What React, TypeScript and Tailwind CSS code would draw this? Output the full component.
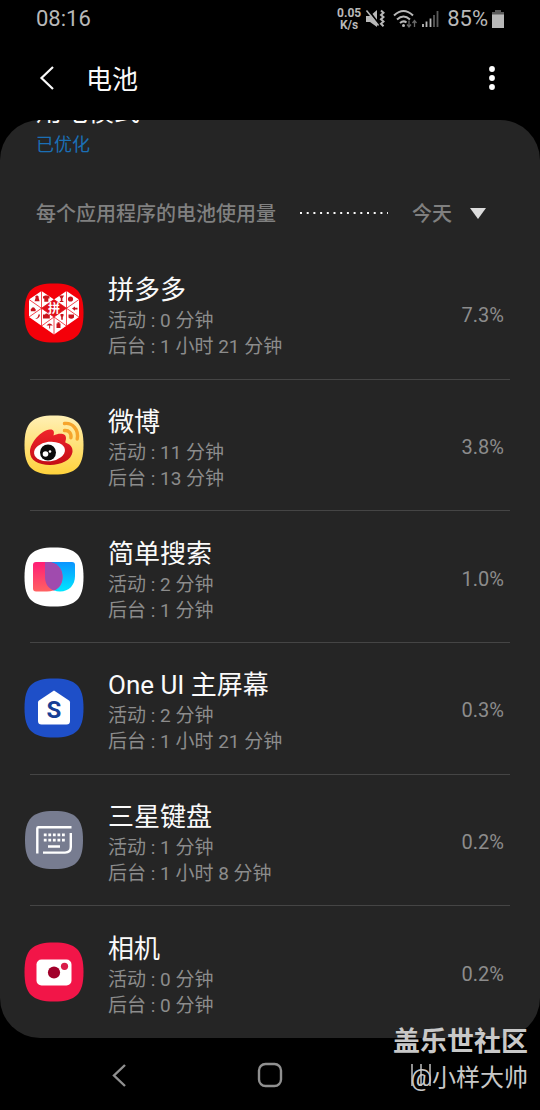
import type { ReactNode } from "react";

interface AppUsage {
  name: string;
  active: string;
  background: string;
  percent: string;
  icon: ReactNode;
}

const SQUIRCLE = "M30 0.5C52 0.5 59.5 8 59.5 30S52 59.5 30 59.5 0.5 52 0.5 30 8 0.5 30 0.5Z";

function PinduoduoIcon() {
  return (
    <svg viewBox="0 0 60 60" className="size-15 shrink-0" aria-hidden="true">
      <path d={SQUIRCLE} fill="#f40009" />
      <path d="M5 16.5 17.5 8 30 16.5 42.5 8 55 16.5V34L30 51.5 5 34Z" fill="#fff" />
      <path
        d="M17.5 8V43M42.5 8V43M30 34V52M5 16.5 30 34M5 34 30 16.5M55 16.5 30 34M55 34 30 16.5M17.5 43 30 34 42.5 43"
        fill="none"
        stroke="#f01822"
        strokeWidth="0.8"
      />
      <path d="M17.5 25.2 30 16.5 42.5 25.2 30 34Z" fill="#e0101a" />
      <g fill="#c8141c">
        <path d="M13 12.5a1.6 1.6 0 0 1 1.6 2.2l1 3.6h-5l1-3.6a1.6 1.6 0 0 1 1.4-2.2Z" />
        <path d="m19 13.5 2-1h2.5l2 1v2h-1.2v3.2h-4v-3.2H19Z" />
        <path d="M6.8 26.5q2.3-4.6 4.8 0v1.8H6.8Z" />
        <path d="M16 31.5q-.4 4.4-5 4.6 3.4-1.4 3.4-4.6Z" />
        <path d="M19 31.5h2l.8-1h1.6l.8 1h1.6v4H19Z" />
        <path d="M35 12.5h5l-1.6 3v2.6h1v.8h-3.6v-.8h1V15.5Z" />
        <circle cx="46.5" cy="16" r="2.6" />
        <path d="m48 25.5 3-2v1.2h2.5v1.8H51v1.2Z" />
        <path d="M36.5 31h3v2l-.7.8v3h-1.6v-3l-.7-.8Z" />
        <path d="M44.5 31.5h5.5v3q-2.7 2.5-5.5 0Z" />
        <path d="M22.5 42.5q3-4 6.3 0h-2.7v3h-.9v-3Z" />
        <path d="M32.5 40.5h1v-1.2h2v1.2h1V45h-4Z" />
      </g>
      <text x="30" y="30" textAnchor="middle" fontSize="12" fontWeight="700" fill="#fff">
        拼
      </text>
    </svg>
  );
}

function WeiboIcon() {
  return (
    <svg viewBox="0 0 60 60" className="size-15 shrink-0" aria-hidden="true">
      <defs>
        <linearGradient id="weibo-bg" x1="0" y1="0" x2="0" y2="1">
          <stop offset="0" stopColor="#fff0b5" />
          <stop offset="1" stopColor="#ffd23c" />
        </linearGradient>
        <linearGradient id="weibo-body" x1="0" y1="0" x2="0" y2="1">
          <stop offset="0" stopColor="#f0252a" />
          <stop offset="1" stopColor="#c40d16" />
        </linearGradient>
      </defs>
      <path d={SQUIRCLE} fill="url(#weibo-bg)" />
      <path
        d="M6 37C6 28 17 15 26 14.5C30 14.3 30.5 17 29.5 20.5C35 18 42 18 42 23C42 25 41.3 26.3 41.3 27.5C46 29 49 32 48.5 37C47.5 45 37 50 26 50C14 50 6 45 6 37Z"
        fill="url(#weibo-body)"
      />
      <ellipse cx="25.5" cy="36.5" rx="15.5" ry="9.7" transform="rotate(-7 25.5 36.5)" fill="#fff" />
      <circle cx="24" cy="37.5" r="8" fill="#0b0b0b" />
      <circle cx="21.5" cy="39" r="2.8" fill="#fff" />
      <circle cx="26" cy="36.5" r="1.3" fill="#fff" />
      <path
        d="M40.5 8.5C48.5 7.5 55 14.5 53.2 24M40.5 15.5C44.8 15 47.7 18.5 46.9 22.8"
        fill="none"
        stroke="#f6a52c"
        strokeWidth="3.4"
        strokeLinecap="round"
      />
    </svg>
  );
}

function SimpleSearchIcon() {
  return (
    <svg viewBox="0 0 60 60" className="size-15 shrink-0" aria-hidden="true">
      <defs>
        <linearGradient id="search-pink" x1="0" y1="0" x2="0" y2="1">
          <stop offset="0" stopColor="#ff1d76" />
          <stop offset="1" stopColor="#ff6262" />
        </linearGradient>
        <linearGradient id="search-blue" x1="0" y1="0" x2="0" y2="1">
          <stop offset="0" stopColor="#0a94ff" />
          <stop offset="1" stopColor="#00e7ff" />
        </linearGradient>
      </defs>
      <path d={SQUIRCLE} fill="#fff" />
      <path d="M21 15H48Q51 15 51 18V29C51 38 45 44.5 36 44.5C27 44.5 21 38 21 30Z" fill="url(#search-blue)" />
      <path d="M12 15H23C32 15 38.5 21 38.5 30S32 44.5 23 44.5H12Q9 44.5 9 41.5V18Q9 15 12 15Z" fill="url(#search-pink)" />
      <path d="M21 15H23C32 15 38.5 21 38.5 30C38.5 37 35 41.5 30 43.5C24.5 41.5 21 37 21 30Z" fill="#a04bae" />
    </svg>
  );
}

function OneUiIcon() {
  return (
    <svg viewBox="0 0 60 60" className="size-15 shrink-0" aria-hidden="true">
      <path d={SQUIRCLE} fill="#1e4fc8" />
      <path d="M30 12.5 45 22.5Q46 23.2 46 24.5V43Q46 46.5 42.5 46.5H17.5Q14 46.5 14 43V24.5Q14 23.2 15 22.5Z" fill="#fff" />
      <text x="30" y="40" textAnchor="middle" fontSize="24" fontWeight="700" fill="#163e95">
        S
      </text>
    </svg>
  );
}

function KeyboardIcon() {
  return (
    <svg viewBox="0 0 60 60" className="size-15 shrink-0" aria-hidden="true">
      <path d="M30 1C51.5 1 59 8.5 59 30S51.5 59 30 59 1 51.5 1 30 8.5 1 30 1Z" fill="#777c90" />
      <path d="M13.3 43.5V18.5Q13.3 17.3 14.5 17.3H47.5M46.8 23V37Q46.8 42.6 41 42.6H19" fill="none" stroke="#fff" strokeWidth="2.4" />
      <path
        d="M19.8 24.9H42M19.8 30.2H42"
        fill="none"
        stroke="#fff"
        strokeWidth="2.8"
        strokeDasharray="2.8 1.75"
      />
      <path d="M24 36.5H36" stroke="#fff" strokeWidth="2.5" />
    </svg>
  );
}

function CameraIcon() {
  return (
    <svg viewBox="0 0 60 60" className="size-15 shrink-0" aria-hidden="true">
      <path d={SQUIRCLE} fill="#f21548" />
      <rect x="12.5" y="17.5" width="35" height="26" rx="5" fill="#fff" />
      <circle cx="30" cy="30.5" r="6.1" fill="#a1002a" />
      <circle cx="40.5" cy="24.3" r="3.6" fill="#d91c49" />
    </svg>
  );
}

const APPS: AppUsage[] = [
  { name: "拼多多", active: "0 分钟", background: "1 小时 21 分钟", percent: "7.3%", icon: <PinduoduoIcon /> },
  { name: "微博", active: "11 分钟", background: "13 分钟", percent: "3.8%", icon: <WeiboIcon /> },
  { name: "简单搜索", active: "2 分钟", background: "1 分钟", percent: "1.0%", icon: <SimpleSearchIcon /> },
  { name: "One UI 主屏幕", active: "2 分钟", background: "1 小时 21 分钟", percent: "0.3%", icon: <OneUiIcon /> },
  { name: "三星键盘", active: "1 分钟", background: "1 小时 8 分钟", percent: "0.2%", icon: <KeyboardIcon /> },
  { name: "相机", active: "0 分钟", background: "0 分钟", percent: "0.2%", icon: <CameraIcon /> },
];

function StatusBar() {
  return (
    <div className="flex h-9 items-center justify-between px-9 pt-0.5 text-[22px] leading-8 text-[#b8b8b8]">
      <span>08:16</span>
      <div className="flex items-center">
        <div className="mr-1 text-center text-[12px] leading-[12px] font-bold">
          <div>0.05</div>
          <div>K/s</div>
        </div>
        <svg viewBox="0 0 20 20" className="mr-2 size-5" aria-hidden="true">
          <path d="M1 7h4l7-6v17l-7-5H1Z" fill="currentColor" />
          <path d="M2.5 0 15.5 17" stroke="#000" strokeWidth="2" />
          <path d="m1.5 1.5 12 15" stroke="currentColor" strokeWidth="1.5" />
          <path d="m16 1.5 2.5 2.2-2.5 2.2 2.5 2.2-2.5 2.2 2.5 2.2-2.5 2.2 2.5 2.5" fill="none" stroke="currentColor" strokeWidth="2" />
        </svg>
        <svg viewBox="0 0 24 20" className="mr-1 h-5 w-6" aria-hidden="true">
          <path d="M1 6.5Q10.5-2.5 20 6.5M4 10.5Q10.5 4.5 17 10.5M7 14Q10.5 11 13.5 13.5" fill="none" stroke="currentColor" strokeWidth="2" />
          <circle cx="10.5" cy="16.5" r="1.5" fill="currentColor" />
          <path d="M16 11.5v6m-2-2 2 2.5 2-2.5M21.5 18v-6m-2 2 2-2.5 2 2.5" fill="none" stroke="#666" strokeWidth="1.3" />
        </svg>
        <svg viewBox="0 0 18 18" className="mr-2 h-[18px] w-[18px]" aria-hidden="true">
          <path d="M2 14v3M5.5 11.5V17M9.5 8.5V17" stroke="currentColor" strokeWidth="1.8" />
          <path d="M13 5v12M16.5 1v16" stroke="#5a5a5a" strokeWidth="1.8" />
        </svg>
        <span>85%</span>
        <svg viewBox="0 0 12 18" className="ml-1 h-[18px] w-3" aria-hidden="true">
          <path d="M3 0h6v2h3v3H0V2h3Z" fill="#5a5a5a" />
          <path d="M0 4.5h12V18H0Z" fill="currentColor" />
        </svg>
      </div>
    </div>
  );
}

function UsageRow({ app }: { app: AppUsage }) {
  return (
    <li className="group flex flex-1 flex-col">
      <div className="flex flex-1 items-center pr-9 pl-6">
        {app.icon}
        <div className="flex-1 pt-[22px] pb-4 pl-6">
          <h3 className="text-[26px] leading-9 text-[#fafafa]">{app.name}</h3>
          <p className="text-[19px] leading-[26px] text-[#8c8c8c]">活动 : {app.active}</p>
          <p className="text-[19px] leading-[26px] text-[#8c8c8c]">后台 : {app.background}</p>
        </div>
        <span className="pt-1 text-[20px] leading-[26px] text-[#8c8c8c]">{app.percent}</span>
      </div>
      <div className="mx-[30px] h-px bg-[#454545] group-last:invisible" />
    </li>
  );
}

export default function App() {
  return (
    <div className="flex min-h-screen flex-col bg-black font-['Roboto','Noto_Sans_CJK_SC',sans-serif]">
      <StatusBar />
      <header className="flex h-21 items-center justify-between px-9">
        <div className="flex items-center gap-7">
          <button type="button" aria-label="返回">
            <svg viewBox="0 0 22 26" className="h-[26px] w-[22px]" aria-hidden="true">
              <path d="M17 2 5.5 13 17 24" fill="none" stroke="#fafafa" strokeWidth="2.2" />
            </svg>
          </button>
          <h1 className="pt-1 text-[26px] leading-9 text-[#fafafa]">电池</h1>
        </div>
        <button type="button" aria-label="更多选项">
          <svg viewBox="0 0 24 24" className="size-6" aria-hidden="true">
            <g fill="#fff">
              <circle cx="12" cy="3" r="2.9" />
              <circle cx="12" cy="12" r="2.9" />
              <circle cx="12" cy="21" r="2.9" />
            </g>
          </svg>
        </button>
      </header>

      <main className="flex flex-1 flex-col overflow-hidden rounded-[40px] bg-[#252525]">
        <section className="-mt-[26px] px-9">
          <h2 className="text-[26px] leading-9 text-[#fafafa]">用电模式</h2>
          <p className="pt-0.5 text-[18px] leading-[26px] text-[#1b6fb5]">已优化</p>
        </section>

        <section className="flex flex-1 flex-col">
          <div className="flex items-center pt-[41px] pr-[54px] pb-[19px] pl-9 text-[20px] leading-[30px] font-medium text-[#808080]">
            <h2>每个应用程序的电池使用量</h2>
            <svg className="mx-6 mb-0.5 h-[2px] flex-1" aria-hidden="true">
              <line x1="0" y1="1" x2="100%" y2="1" stroke="#fafafa" strokeWidth="2" strokeDasharray="2 4.7" />
            </svg>
            <button type="button" className="flex items-center gap-[18px]">
              今天
              <svg viewBox="0 0 16 11" className="mb-0.5 h-[11px] w-4" aria-hidden="true">
                <path d="M0 0h16L8 11Z" fill="#dcdcdc" />
              </svg>
            </button>
          </div>
          <ul className="flex flex-1 flex-col">
            {APPS.map((app) => (
              <UsageRow key={app.name} app={app} />
            ))}
          </ul>
        </section>
      </main>

      <footer className="relative h-18">
        <nav className="flex h-full items-center justify-between px-27 pt-0.5 text-[#909090]">
          <button type="button" aria-label="后退">
            <svg viewBox="0 0 24 24" className="size-6" aria-hidden="true">
              <path d="M17 2 6 12.5 17 23" fill="none" stroke="currentColor" strokeWidth="2.4" />
            </svg>
          </button>
          <button type="button" aria-label="主页">
            <svg viewBox="0 0 26 26" className="size-[26px]" aria-hidden="true">
              <rect x="2" y="2" width="22" height="22" rx="6.5" fill="none" stroke="currentColor" strokeWidth="2.4" />
            </svg>
          </button>
          <button type="button" aria-label="最近">
            <svg viewBox="0 0 24 24" className="size-6" aria-hidden="true">
              <path d="M4 1v22M13 1v22M22 1v22" stroke="currentColor" strokeWidth="2" />
            </svg>
          </button>
        </nav>
        <div className="absolute right-3 bottom-3.5 text-right text-[#c8c8c8]">
          <p className="text-[27px] leading-9 font-bold">盖乐世社区</p>
          <p className="text-[24px] leading-9">@小样大帅</p>
        </div>
      </footer>
    </div>
  );
}
